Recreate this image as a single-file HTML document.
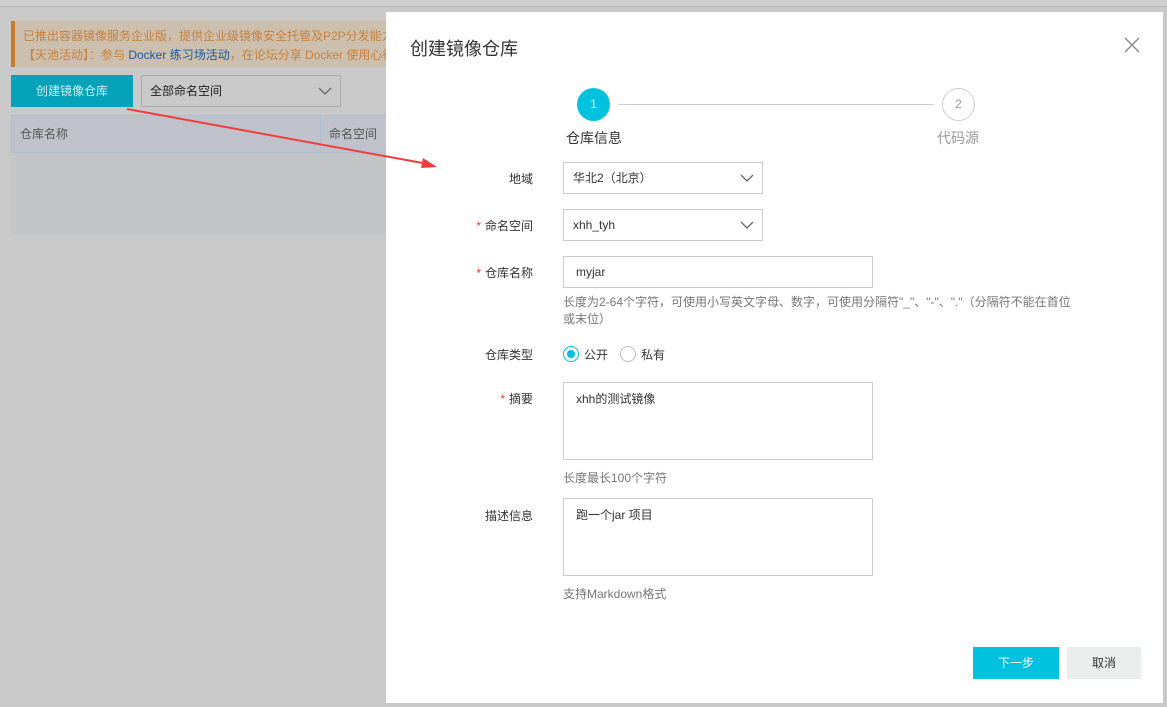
<!DOCTYPE html>
<html><head><meta charset="utf-8"><style>
*{box-sizing:border-box;margin:0;padding:0}
body{width:1167px;height:707px;overflow:hidden;background:#c9c9c9;font-family:"Liberation Sans","Noto Sans CJK SC",sans-serif;font-size:12px;color:#333;position:relative}
.a{position:absolute}
.lbl{position:absolute;text-align:right;width:150px;left:383px;color:#333}
.req{color:#e33;margin-right:4px}
.inp{position:absolute;left:563px;border:1px solid #ccc;background:#fff;height:32px;line-height:30px;padding-left:9px;color:#333}
.chev{position:absolute;right:8px;top:10px}
.hint{position:absolute;left:563px;color:#777;line-height:17px}
</style></head><body>
<div class="a" style="left:0;top:0;width:1167px;height:7px;background:#cfcfcf;border-bottom:1px solid #b8b8b8"></div>
<div class="a" style="left:11px;top:21px;width:380px;height:46px;background:#cdbfae;border-left:4px solid #c87a2a"></div>
<div class="a" style="left:23px;top:27px;color:#c8803a;white-space:nowrap;font-size:12px">已推出容器镜像服务企业版，提供企业级镜像安全托管及P2P分发能力</div>
<div class="a" style="left:23px;top:46px;color:#c8803a;white-space:nowrap;font-size:12px">【天池活动】：参与 <span style="color:#1b5a9e">Docker 练习场活动</span>，在论坛分享 Docker 使用心得</div>
<div class="a" style="left:11px;top:75px;width:122px;height:32px;background:#05a2b9;color:#cdeff3;line-height:32px;text-align:center">创建镜像仓库</div>
<div class="a" style="left:141px;top:75px;width:200px;height:32px;border:1px solid #aaa;background:#c9c9c9;line-height:30px;padding-left:8px;color:#222">全部命名空间
<svg class="chev" width="14" height="10" viewBox="0 0 14 10"><path d="M1 2l6 6 6-6" fill="none" stroke="#666" stroke-width="1.3"/></svg></div>
<div class="a" style="left:11px;top:115px;width:380px;height:38px;background:#bfc2ca;border:1px solid #adbdd3"></div>
<div class="a" style="left:320px;top:115px;width:1px;height:38px;background:#adbdd3"></div>
<div class="a" style="left:20px;top:125px;color:#555">仓库名称</div>
<div class="a" style="left:329px;top:125px;color:#555">命名空间</div>
<div class="a" style="left:11px;top:153px;width:380px;height:81px;background:#c4c5c7"></div>

<div class="a" style="left:386px;top:12px;width:777px;height:691px;background:#fff"></div>
<div class="a" style="left:410px;top:35px;font-size:18px;color:#333">创建镜像仓库</div>
<svg class="a" style="left:1124px;top:37px" width="16" height="16" viewBox="0 0 16 16"><path d="M1 1l14 14M15 1L1 15" stroke="#888" stroke-width="1.4"/></svg>

<div class="a" style="left:577px;top:88px;width:33px;height:33px;border-radius:50%;background:#00c1de;color:#fff;text-align:center;line-height:33px">1</div>
<div class="a" style="left:618px;top:104px;width:316px;height:1px;background:#ccc"></div>
<div class="a" style="left:942px;top:88px;width:33px;height:33px;border-radius:50%;border:1px solid #ccc;color:#999;text-align:center;line-height:31px">2</div>
<div class="a" style="left:566px;top:128px;font-size:14px;color:#333">仓库信息</div>
<div class="a" style="left:937px;top:128px;font-size:14px;color:#999">代码源</div>

<div class="lbl" style="top:170px">地域</div>
<div class="inp" style="top:162px;width:200px">华北2（北京）<svg class="chev" width="14" height="10" viewBox="0 0 14 10"><path d="M1 2l6 6 6-6" fill="none" stroke="#666" stroke-width="1.3"/></svg></div>
<div class="lbl" style="top:217px"><span class="req">*</span>命名空间</div>
<div class="inp" style="top:209px;width:200px">xhh_tyh<svg class="chev" width="14" height="10" viewBox="0 0 14 10"><path d="M1 2l6 6 6-6" fill="none" stroke="#666" stroke-width="1.3"/></svg></div>
<div class="lbl" style="top:264px"><span class="req">*</span>仓库名称</div>
<div class="inp" style="top:256px;width:310px;padding-left:12px">myjar</div>
<div class="hint" style="top:294px;width:512px">长度为2-64个字符，可使用小写英文字母、数字，可使用分隔符"_"、"-"、"."（分隔符不能在首位或末位）</div>
<div class="lbl" style="top:346px">仓库类型</div>
<div class="a" style="left:563px;top:346px;width:16px;height:16px;border-radius:50%;border:1px solid #00c1de"></div>
<div class="a" style="left:567px;top:350px;width:8px;height:8px;border-radius:50%;background:#00c1de"></div>
<div class="a" style="left:584px;top:346px">公开</div>
<div class="a" style="left:620px;top:346px;width:16px;height:16px;border-radius:50%;border:1px solid #bbb"></div>
<div class="a" style="left:641px;top:346px">私有</div>
<div class="lbl" style="top:390px"><span class="req">*</span>摘要</div>
<div class="inp" style="top:382px;width:310px;height:78px;line-height:16px;padding:8px 12px">xhh的测试镜像</div>
<div class="hint" style="top:470px">长度最长100个字符</div>
<div class="lbl" style="top:507px">描述信息</div>
<div class="inp" style="top:498px;width:310px;height:78px;line-height:16px;padding:8px 12px">跑一个jar 项目</div>
<div class="hint" style="top:586px">支持Markdown格式</div>

<div class="a" style="left:973px;top:647px;width:86px;height:32px;background:#00c1de;color:#fff;text-align:center;line-height:32px">下一步</div>
<div class="a" style="left:1067px;top:647px;width:74px;height:32px;background:#ebecec;color:#333;text-align:center;line-height:32px">取消</div>

<svg class="a" style="left:0;top:0" width="1167" height="707"><path d="M127 109L428 164" stroke="#f03c3c" stroke-width="2"/><path d="M437 167l-14-9-2 10z" fill="#f03c3c"/></svg>
</body></html>
